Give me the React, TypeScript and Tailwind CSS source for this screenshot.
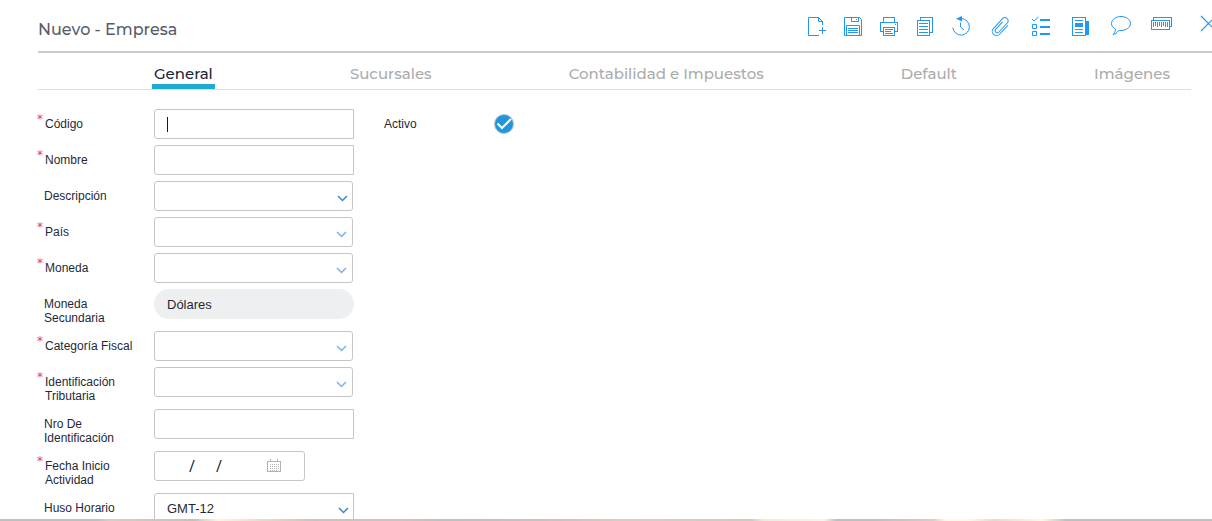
import React, { useState } from "react";

type IconProps = { children: React.ReactNode; crisp?: boolean };

function Icon({ children, crisp = false }: IconProps) {
  return (
    <svg
      viewBox="0 0 20 20"
      width="20"
      height="20"
      fill="none"
      stroke="currentColor"
      shapeRendering={crisp ? "crispEdges" : "auto"}
      className="h-5 w-5 overflow-visible"
      aria-hidden="true"
    >
      {children}
    </svg>
  );
}

function ToolButton({ label, children, crisp }: IconProps & { label: string }) {
  return (
    <button type="button" aria-label={label} className="h-5 w-5 shrink-0 cursor-pointer">
      <Icon crisp={crisp}>{children}</Icon>
    </button>
  );
}

function Toolbar() {
  return (
    <div className="flex shrink-0 text-[#2196f3]">
      <div className="flex gap-4">
        <ToolButton label="Nuevo">
          <path d="M12 19.5H1.5V1.5H11.5L15.5 5.5V9M11.5 1.5V5.5H15.5M12 14.5H19M15.5 11V18" />
        </ToolButton>
        <ToolButton label="Guardar">
          <path d="M1.5 1.5H16.5L18.5 3.5V19.5H1.5ZM8.5 1.5V5.5H15.5V1.5M3.5 19.5V9.5H16.5V19.5M5 12.5H15M5 14.5H15M5 16.5H15M13 3.5H14" />
        </ToolButton>
        <ToolButton label="Imprimir" crisp>
          <path d="M4.5 6V1.5H15.5V6M4 15.5H1.5V6.5H18.5V15.5H16M4.5 11.5H15.5V19.5H4.5ZM6 13.5H14M6 15.5H12M6 17.5H14M16 8.5H17" />
        </ToolButton>
        <ToolButton label="Copiar" crisp>
          <path d="M5.5 4V1.5H17.5V16.5H14M2.5 4.5H14.5V19.5H2.5ZM4 7.5H13M4 10.5H13M4 13.5H13M4 16.5H13" />
        </ToolButton>
        <ToolButton label="Historial">
          <path d="M10.5 2.5A8.3 8.3 0 1 1 1.8 11.5M9.5 6.5V11L13 14" />
          <path d="M5 2.8L11 0V5.6Z" fill="currentColor" stroke="none" />
        </ToolButton>
      </div>
      <div className="ml-5 flex gap-5">
        <ToolButton label="Adjuntar">
          <g transform="rotate(43 10 10.5)">
            <path d="M14.2 5V17.2a4.2 4.2 0 0 1-8.4 0V3a3.3 3.3 0 0 1 6.4 0V16a2.1 2.1 0 0 1-4.2 0V6" />
          </g>
        </ToolButton>
        <ToolButton label="Tareas">
          <path d="M1 3L3 5L7.5 1M1.5 8.5H5.5V12.5H1.5ZM1.5 15.5H5.5V19.5H1.5Z" />
          <path d="M9 4H19M9 11H19M9 18H19" strokeWidth="2" />
        </ToolButton>
        <ToolButton label="Noticias" crisp>
          <path d="M1.5 1.5H14.5V19.5H1.5ZM4 4.5H12M4 13.5H12M4 16.5H12" />
          <path d="M4 7H12V11H4ZM15 5H18V19H15Z" fill="currentColor" stroke="none" />
        </ToolButton>
        <ToolButton label="Comentarios">
          <path d="M4.5 13C1.5 11.5.5 9.5.5 7.5C.5 3.5 5 .5 10 .5S19.5 3.5 19.5 7.5S15 14.5 10 14.5C9.2 14.5 8.4 14.4 7.8 14.3C6 17 4 18.5 2 18.5C3.8 17 4.6 15.2 4.5 13Z" />
        </ToolButton>
        <ToolButton label="Código de barras" crisp>
          <path d="M2.5 4V1.5H20.5V10.5H19M.5 4.5H18.5V13.5H.5ZM2.5 6V11M4.5 6V10M6.5 6V11M8.5 6V10M10.5 6V11M12.5 6V10M14.5 6V11M16.5 6V11" />
        </ToolButton>
      </div>
      <button type="button" aria-label="Cerrar" className="ml-[29px] h-5 w-3 cursor-pointer">
        <Icon>
          <path d="M1 0L16 15M16 0L1 15" strokeWidth="1.2" />
        </Icon>
      </button>
    </div>
  );
}

const tabs = ["General", "Sucursales", "Contabilidad e Impuestos", "Default", "Imágenes"];

function Tabs() {
  const [active, setActive] = useState("General");
  return (
    <nav
      role="tablist"
      className="mr-[21px] ml-[38px] flex h-[37px] shrink-0 justify-between border-b border-[#dcdde0] pr-[19px] pl-[114px] font-[Montserrat,Inter,sans-serif] text-[15px] font-medium"
    >
      {tabs.map((tab) => (
        <button
          key={tab}
          type="button"
          role="tab"
          aria-selected={tab === active}
          onClick={() => setActive(tab)}
          className={
            tab === active
              ? "border-b-[5px] border-[#1bacd0] px-0.5 pt-2.5 text-[#1c2536]"
              : "border-b-[5px] border-transparent px-0.5 pt-2.5 text-[#aaabac]"
          }
        >
          {tab}
        </button>
      ))}
    </nav>
  );
}

type RowProps = { id: string; label: string; required?: boolean; children: React.ReactNode };

function Row({ id, label, required = false, children }: RowProps) {
  return (
    <div className="flex items-start">
      <label htmlFor={id} className="flex w-[117px] shrink-0 pt-2 leading-[14px]">
        {required ? (
          <span className="w-2 shrink-0 font-['DejaVu_Sans',sans-serif] leading-1 text-[#ef3b3b]">*</span>
        ) : (
          <span className="w-[7px] shrink-0" />
        )}
        <span className="max-w-24">{label}</span>
      </label>
      {children}
    </div>
  );
}

function TextField({ id, caret = false }: { id: string; caret?: boolean }) {
  return (
    <div className="relative w-[200px]">
      <input
        id={id}
        type="text"
        className="block h-[30px] w-full rounded-l-[3px] border border-[#c6c6c6] bg-white px-3 text-[13px] outline-none"
      />
      {caret && <span className="pointer-events-none absolute top-2 left-[13px] h-[15px] w-px bg-[#111827]" />}
    </div>
  );
}

function Chevron({ className }: { className: string }) {
  return (
    <svg viewBox="0 0 11 7" width="11" height="7" fill="none" stroke="currentColor" className={className} aria-hidden="true">
      <path d="M1 1L5.5 5.5L10 1" strokeWidth="1.5" />
    </svg>
  );
}

function ComboField({ id, strong = false }: { id: string; strong?: boolean }) {
  return (
    <div className="relative w-[199px]">
      <select
        id={id}
        className="block h-[30px] w-full appearance-none rounded-[3px] border border-[#c6c6c6] bg-white px-3 text-[13px] outline-none"
      >
        <option value="" />
      </select>
      <Chevron
        className={
          strong
            ? "pointer-events-none absolute top-[14px] right-[5px] text-[#3d87cd]"
            : "pointer-events-none absolute top-[14px] right-[6px] text-[#7fb0de]"
        }
      />
    </div>
  );
}

function CalendarIcon() {
  return (
    <svg viewBox="0 0 14 14" width="14" height="14" fill="none" stroke="#b3b3b3" shapeRendering="crispEdges" aria-hidden="true">
      <path d="M.5 2.5H13.5V12.5H.5ZM3.5 0V3M10.5 0V3" />
      <path d="M3 5.5H12M3 7.5H12M3 9.5H12M3 11.5H10" strokeDasharray="1 1" />
    </svg>
  );
}

function DateField({ id }: { id: string }) {
  return (
    <div className="flex h-[30px] w-[151px] items-center rounded-[3px] border border-[#c6c6c6] font-['Open_Sans',sans-serif] text-[16px]">
      <input id={id} type="text" aria-label="Día" className="ml-3 w-[22px] text-right outline-none" />
      <span className="w-[6px] text-center">/</span>
      <input type="text" aria-label="Mes" className="w-[21px] text-center outline-none" />
      <span className="w-[6px] text-center">/</span>
      <input type="text" aria-label="Año" className="w-[45px] outline-none" />
      <button type="button" aria-label="Abrir calendario" className="cursor-pointer">
        <CalendarIcon />
      </button>
    </div>
  );
}

export default function App() {
  const [enabled, setEnabled] = useState(true);
  return (
    <div className="flex h-screen flex-col overflow-hidden bg-white font-['Liberation_Sans',Arial,sans-serif] text-[12px] text-[#1f2937]">
      <header className="ml-[38px] flex h-[53px] shrink-0 justify-between border-b-2 border-[#cbcbd1] pt-4">
        <h1 className="font-[Montserrat,Inter,sans-serif] text-[16px] leading-7 font-medium text-[#585d69]">
          Nuevo - Empresa
        </h1>
        <Toolbar />
      </header>
      <Tabs />
      <main className="flex min-h-0 flex-1 overflow-hidden pt-[19px] pl-[37px]">
        <form className="flex shrink-0 flex-col gap-[6px]">
          <Row id="codigo" label="Código" required>
            <TextField id="codigo" caret />
          </Row>
          <Row id="nombre" label="Nombre" required>
            <TextField id="nombre" />
          </Row>
          <Row id="descripcion" label="Descripción">
            <ComboField id="descripcion" strong />
          </Row>
          <Row id="pais" label="País" required>
            <ComboField id="pais" />
          </Row>
          <Row id="moneda" label="Moneda" required>
            <ComboField id="moneda" />
          </Row>
          <Row id="moneda2" label="Moneda Secundaria">
            <input
              id="moneda2"
              type="text"
              readOnly
              value="Dólares"
              className="h-[30px] w-[200px] rounded-full bg-[#eeeff1] px-[13px] text-[13px] outline-none"
            />
          </Row>
          <Row id="categoria" label="Categoría Fiscal" required>
            <ComboField id="categoria" />
          </Row>
          <Row id="tributaria" label="Identificación Tributaria" required>
            <ComboField id="tributaria" />
          </Row>
          <Row id="nro" label="Nro De Identificación">
            <TextField id="nro" />
          </Row>
          <Row id="fecha" label="Fecha Inicio Actividad" required>
            <DateField id="fecha" />
          </Row>
          <Row id="huso" label="Huso Horario">
            <div className="relative w-[200px]">
              <select
                id="huso"
                className="block h-[30px] w-full appearance-none rounded-l-[3px] border border-[#c6c6c6] bg-white px-3 pt-px text-[13px] outline-none"
              >
                <option>GMT-12</option>
              </select>
              <Chevron className="pointer-events-none absolute top-[14px] right-[5px] text-[#3d87cd]" />
            </div>
          </Row>
        </form>
        <div className="ml-[30px] flex items-start">
          <label htmlFor="activo" className="w-[110px] pt-2 leading-[14px]">
            Activo
          </label>
          <span className="relative mt-[5px] h-5 w-5">
            <input
              id="activo"
              type="checkbox"
              checked={enabled}
              onChange={(event) => setEnabled(event.target.checked)}
              className="block h-5 w-5 appearance-none rounded-full border border-[#b9c6d0] checked:bg-[#2196db]"
            />
            {enabled && (
              <svg
                viewBox="0 0 20 20"
                fill="none"
                stroke="white"
                strokeWidth="2"
                className="pointer-events-none absolute inset-0 h-5 w-5"
                aria-hidden="true"
              >
                <path d="M3.5 9.5L8 14L17 5" />
              </svg>
            )}
          </span>
        </div>
      </main>
      <footer className="h-0.5 shrink-0 bg-[linear-gradient(90deg,#bfbfc0_0%,#bfbfc0_8%,#d9cdc4_9%,#c5c0c0_16%,#fff5dc_18%,#ecd6c2_22%,#cbc2bf_26%,#d3c2bf_33%,#bfbfc2_37%,#d0c0c1_46%,#dccbc5_52%,#cfcac3_62%,#f0eadb_63%,#f8f4e6_68%,#bfbfbf_69%,#bfbfbf_72%,#dccbc7_77%,#fff8df_78%,#fff8df_80%,#e8d8cc_82%,#fff8df_86%,#bfbfbf_88%,#bfbfbf_100%)]" />
    </div>
  );
}
